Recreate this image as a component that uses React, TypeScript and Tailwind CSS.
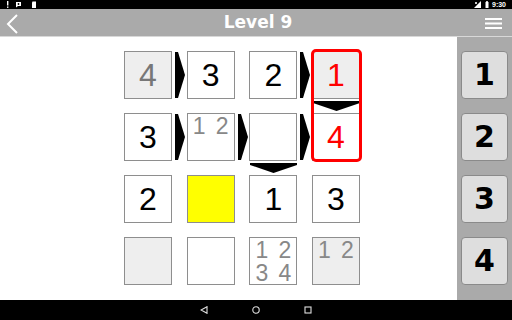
import React from "react";

type Cell = {
  v?: string;
  color?: "black" | "gray" | "red";
  bg?: "white" | "gray" | "yellow";
  pencil?: string[];
  right?: boolean;
  down?: boolean;
};

const rows: Cell[][] = [
  [
    { v: "4", color: "gray", bg: "gray", right: true },
    { v: "3" },
    { v: "2", right: true },
    { v: "1", color: "red", bg: "gray", down: true },
  ],
  [
    { v: "3", right: true },
    { pencil: ["1", "2"], right: true },
    { down: true, right: true },
    { v: "4", color: "red" },
  ],
  [{ v: "2" }, { bg: "yellow" }, { v: "1" }, { v: "3" }],
  [
    { bg: "gray" },
    {},
    { pencil: ["1", "2", "3", "4"] },
    { bg: "gray", pencil: ["1", "2"] },
  ],
];

function RightArrow() {
  return (
    <svg
      className="absolute left-[49px] top-[1px] pointer-events-none"
      width="12"
      height="46"
      viewBox="0 0 12 46"
    >
      <polygon points="2,0 5,0 12,23 5,46 2,46" fill="#000" />
    </svg>
  );
}

function DownArrow() {
  return (
    <svg
      className="absolute left-[1px] top-[49px] pointer-events-none"
      width="47"
      height="12"
      viewBox="0 0 47 12"
    >
      <polygon points="0,1 47,1 47,3 23.5,11 0,3" fill="#000" />
    </svg>
  );
}

function GridCell({ c }: { c: Cell }) {
  const bg =
    c.bg === "gray" ? "bg-[#eeeeee]" : c.bg === "yellow" ? "bg-[#ffff00]" : "bg-white";
  const color =
    c.color === "gray" ? "text-[#777777]" : c.color === "red" ? "text-[#ff0000]" : "text-black";
  return (
    <div className="relative w-[48px] h-[48px]">
      <div
        className={`w-full h-full border border-[#8e8e8e] ${bg} flex items-center justify-center`}
      >
        {c.v && (
          <span className={`text-[32px] leading-none ${color}`}>{c.v}</span>
        )}
        {c.pencil && (
          <div className="w-full h-full grid grid-cols-2 grid-rows-[23px_23px] text-[23px] leading-[23px] text-[#888888] pt-[1px]">
            {c.pencil.map((p) => (
              <span key={p} className="text-center">
                {p}
              </span>
            ))}
          </div>
        )}
      </div>
      {c.right && <RightArrow />}
      {c.down && <DownArrow />}
    </div>
  );
}

export default function App() {
  return (
    <div
      className="w-[512px] h-[320px] flex flex-col overflow-hidden bg-white"
      style={{ fontFamily: '"Liberation Sans", Arial, sans-serif' }}
    >
      {/* status bar */}
      <div className="h-[9px] bg-black flex items-center justify-between px-[6px] text-white">
        <div className="flex items-center gap-[6px]">
          <svg width="3" height="7" viewBox="0 0 3 7">
            <rect x="1" y="0" width="1.4" height="4.5" fill="#fff" />
            <rect x="1" y="5.5" width="1.4" height="1.4" fill="#fff" />
          </svg>
          <svg width="7" height="7" viewBox="0 0 7 7">
            <path d="M1 1h5v4H3L1 6.5z" fill="#fff" />
            <circle cx="3.5" cy="3" r="0.9" fill="#000" />
          </svg>
          <svg width="6" height="7" viewBox="0 0 6 7" className="ml-[3px]">
            <path d="M1.5 0.5h3.5v6.5H1V1.5z" fill="#fff" />
          </svg>
        </div>
        <div className="flex items-center gap-[3px]">
          <svg width="8" height="7" viewBox="0 0 8 7">
            <polygon points="0,7 7,0 7,7" fill="#fff" />
            <path d="M1 1l2 2M3 1l-2 2" stroke="#fff" strokeWidth="0.8" />
          </svg>
          <svg width="4" height="7" viewBox="0 0 4 7">
            <rect x="0.5" y="1" width="3" height="6" fill="#fff" />
            <rect x="1.2" y="0" width="1.6" height="1" fill="#fff" />
          </svg>
          <span className="text-[7px] leading-none font-bold">9:30</span>
        </div>
      </div>

      {/* header */}
      <div className="h-[28px] bg-[#aaaaaa] relative flex items-center justify-center border-b border-[#d8d8d8]">
        <svg
          className="absolute left-[5px] top-[5px]"
          width="14"
          height="20"
          viewBox="0 0 14 20"
        >
          <polyline
            points="12,1 3,10 12,19"
            fill="none"
            stroke="#fff"
            strokeWidth="2"
          />
        </svg>
        <span
          className="text-white text-[17px] font-bold leading-none ml-[4px]"
          style={{ fontFamily: '"DejaVu Sans", sans-serif' }}
        >
          Level 9
        </span>
        <svg
          className="absolute right-[10px] top-[9px]"
          width="17"
          height="11"
          viewBox="0 0 17 11"
        >
          <rect x="0" y="0" width="17" height="2" fill="#fff" />
          <rect x="0" y="4.5" width="17" height="2" fill="#fff" />
          <rect x="0" y="9" width="17" height="2" fill="#fff" />
        </svg>
      </div>

      {/* body */}
      <div className="flex-1 flex min-h-0">
        <div className="flex-1 bg-white pl-[124px] pt-[14px]">
          <div className="relative grid grid-cols-[repeat(4,48px)] gap-x-[14.67px] gap-y-[14px] w-max">
            {rows.map((r, i) =>
              r.map((c, j) => <GridCell key={`${i}-${j}`} c={c} />)
            )}
            <div className="absolute left-[186.5px] top-[-2px] w-[51px] h-[113px] border-[3px] border-[#ff0000] rounded-[5px] pointer-events-none" />
          </div>
        </div>
        <div className="w-[55px] bg-[#aaaaaa] flex flex-col items-center gap-[14px] pt-[14px]">
          {["1", "2", "3", "4"].map((n) => (
            <div
              key={n}
              className="w-[47px] h-[48px] bg-[#dedede] border border-[#8a8a8a] rounded-[4px] flex items-center justify-center"
            >
              <span
                className="text-[30px] font-bold leading-none text-black"
                style={{ fontFamily: '"DejaVu Sans", sans-serif' }}
              >
                {n}
              </span>
            </div>
          ))}
        </div>
      </div>

      {/* nav bar */}
      <div className="h-[20px] bg-black flex items-center justify-center gap-[44px]">
        <svg width="8" height="8" viewBox="0 0 8 8">
          <polygon points="7,0.7 7,7.3 1,4" fill="none" stroke="#e0e0e0" strokeWidth="1.1" />
        </svg>
        <svg width="8" height="8" viewBox="0 0 8 8">
          <circle cx="4" cy="4" r="3.2" fill="none" stroke="#e0e0e0" strokeWidth="1.1" />
        </svg>
        <svg width="8" height="8" viewBox="0 0 8 8">
          <rect x="1" y="1" width="6" height="6" fill="none" stroke="#e0e0e0" strokeWidth="1.1" />
        </svg>
      </div>
    </div>
  );
}
